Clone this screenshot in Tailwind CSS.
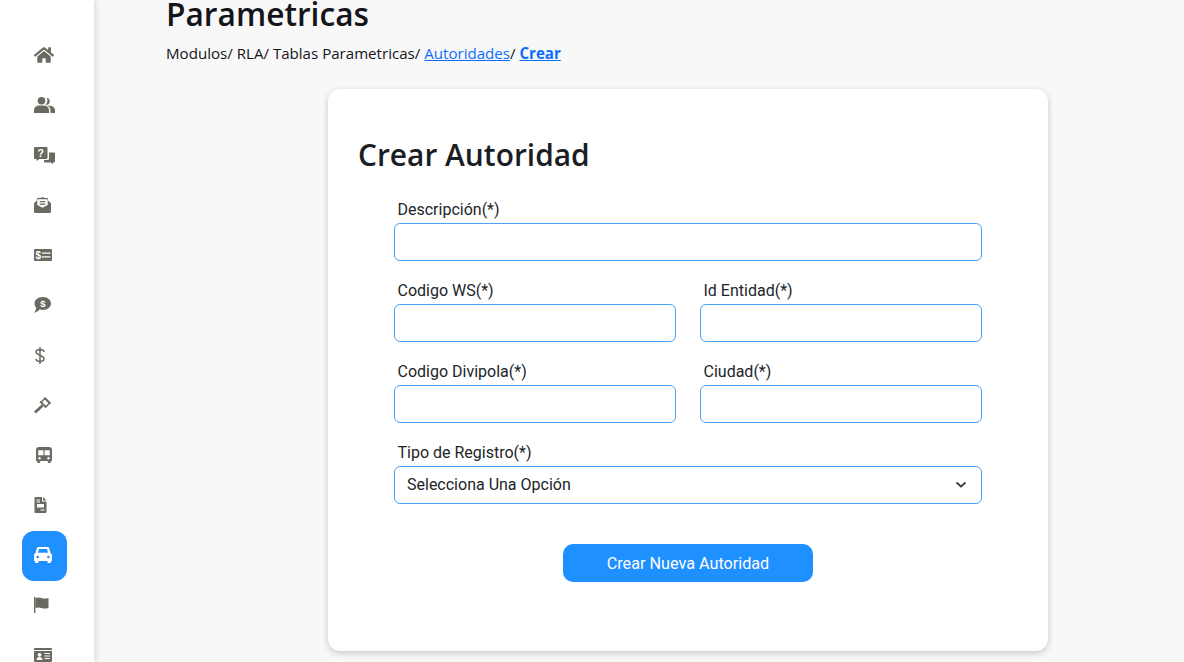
<!DOCTYPE html>
<html lang="es">
<head>
    <meta charset="UTF-8">
    <meta name="viewport" content="width=device-width, initial-scale=1.0">
    <title>Crear Autoridad</title>
    <script src="https://cdn.jsdelivr.net/npm/@tailwindcss/browser@4"></script>
</head>
<body class="bg-[#f8f8f8] h-[662px] overflow-hidden flex font-['Roboto',sans-serif] text-[#212529]">

    <!-- Sidebar -->
    <aside class="w-[94px] h-[662px] shrink-0 bg-white shadow-[0_0_8px_rgba(0,0,0,0.18)] overflow-hidden z-10">
        <nav class="flex flex-col pt-[30px] pl-[22px] text-[#6b6a60]">
            <a class="w-[45px] h-[50px] flex items-center pl-[12px]">
                <svg class="w-[20px] h-[18px]" viewBox="0 0 576 512" fill="currentColor"><path d="M280.37 148.26L96 300.11V464a16 16 0 0 0 16 16l112.06-.29a16 16 0 0 0 15.92-16V368a16 16 0 0 1 16-16h64a16 16 0 0 1 16 16v95.64a16 16 0 0 0 16 16.05L464 480a16 16 0 0 0 16-16V300L295.67 148.26a12.19 12.19 0 0 0-15.3 0zM571.6 251.47L488 182.56V44.05a12 12 0 0 0-12-12h-56a12 12 0 0 0-12 12v72.61L318.47 43a48 48 0 0 0-61 0L4.34 251.47a12 12 0 0 0-1.6 16.9l25.5 31A12 12 0 0 0 45.15 301l235.22-193.74a12.19 12.19 0 0 1 15.3 0L530.9 301a12 12 0 0 0 16.9-1.6l25.5-31a12 12 0 0 0-1.7-16.93z"/></svg>
            </a>
            <a class="w-[45px] h-[50px] flex items-center pl-[12px]">
                <svg class="w-[21px] h-[16px]" viewBox="0 0 21 16" fill="currentColor"><circle cx="7.500" cy="3.800" r="3.800"/><path d="M0 16v-2.500C0 10 2.500 8.500 5 8.500h5c2.500 0 5 1.500 5 5V16z"/><path d="M12.500.6a3.800 3.800 0 0 1 1.500 7A4 4 0 0 1 11.500 7.700 5.200 5.200 0 0 0 12.500.6z"/><path d="M13 8.600c3.500 0 8 .9 8 5V16h-4.500v-2.800c0-2-1.300-3.600-3.500-4.600z"/></svg>
            </a>
            <a class="w-[45px] h-[50px] flex items-center pl-[12px]">
                <svg class="w-[21px] h-[17px]" viewBox="0 0 21 17"><path fill="currentColor" d="M1 0h11.500a1 1 0 0 1 1 1v10a1 1 0 0 1-1 1H5.500L2.500 14v-2H1a1 1 0 0 1-1-1V1a1 1 0 0 1 1-1z"/><path fill="currentColor" d="M15 5.500h5a1 1 0 0 1 1 1v8a1 1 0 0 1-1 1h-1v1.500L16.500 15.500h-5.500a1 1 0 0 1-1-1v-1.500h3.500a1.500 1.500 0 0 0 1.500-1.500z"/><text x="6.700" y="9.700" font-size="10.500" font-weight="700" text-anchor="middle" fill="#fff" font-family="Liberation Sans, sans-serif">?</text></svg>
            </a>
            <a class="w-[45px] h-[50px] flex items-center pl-[12px]">
                <svg class="w-[17px] h-[16px]" viewBox="0 0 18 17"><path fill="currentColor" d="M0 6.500 3 4V2a1 1 0 0 1 1-1h2.800L9 0l2.200 1H14a1 1 0 0 1 1 1v2l3 2.500V16a1 1 0 0 1-1 1H1a1 1 0 0 1-1-1z"/><path fill="#fff" d="M3.500 2.500h11v6L9 11.500 3.500 8.500z"/><path stroke="currentColor" stroke-width="1.300" d="M6 5h6M6 7.500h6"/></svg>
            </a>
            <a class="w-[45px] h-[50px] flex items-center pl-[12px]">
                <svg class="w-[18px] h-[12px]" viewBox="0 0 18 12"><rect width="18" height="12" rx="1" fill="currentColor"/><text x="4.200" y="9.600" font-size="10" font-weight="700" text-anchor="middle" fill="#fff" font-family="Liberation Sans, sans-serif">$</text><path stroke="#fff" stroke-width="1.300" d="M8 4.200h8.500M8 7.800h8.500"/></svg>
            </a>
            <a class="w-[45px] h-[50px] flex items-center pl-[12px]">
                <svg class="w-[17px] h-[16px]" viewBox="0 0 17 16"><path fill="currentColor" d="M8.800 0C13.500 0 17 2.900 17 6.500S13.500 13 8.800 13c-1.200 0-2.300-.2-3.300-.5C4.400 13.900 2.500 15.500 0 15.800c1-1 2-2.700 2.200-5C1 9.600.5 8.100.5 6.500.5 2.900 4 0 8.800 0z"/><text x="8.800" y="10" font-size="9.500" font-weight="700" text-anchor="middle" fill="#fff" font-family="Liberation Sans, sans-serif">$</text></svg>
            </a>
            <a class="w-[45px] h-[50px] flex items-center pl-[13px]">
                <svg class="w-[10px] h-[17px]" viewBox="0 0 10 17" fill="none" stroke="currentColor" stroke-width="1.500"><path d="M9 5c0-1.500-1.500-2.500-4-2.500S1 3.600 1 5c0 3.500 8 3 8 6.800 0 1.500-1.700 2.700-4 2.700s-4-1-4-2.700M5 0v17"/></svg>
            </a>
            <a class="w-[45px] h-[50px] flex items-center pl-[12px]">
                <svg class="w-[17px] h-[17px]" viewBox="0 0 17 17"><path d="M10.800 1.500 15.500 6.200 11.800 9.900 7.100 5.200z" fill="#fff" stroke="currentColor" stroke-width="1.500"/><path d="M8.500 8.500 1 15.500" stroke="currentColor" stroke-width="2.800"/><path d="M10.500.5l6 6M6 4.500l6 6" stroke="currentColor" stroke-width="1.600"/></svg>
            </a>
            <a class="w-[45px] h-[50px] flex items-center pl-[13.500px]">
                <svg class="w-[16px] h-[16px]" viewBox="0 0 16 16"><path fill="currentColor" d="M3 0h10a3 3 0 0 1 3 3v11h-1.200v1.200a.8.800 0 0 1-.8.800h-1.400a.8.800 0 0 1-.8-.8V14H4.200v1.200a.8.800 0 0 1-.8.800H2a.8.800 0 0 1-.8-.8V14H0V3a3 3 0 0 1 3-3z"/><path fill="#fff" d="M2.200 3.200h5.200v5H2.200zM8.600 3.200h5.200v5H8.600z"/><circle cx="3.500" cy="11.200" r="1.200" fill="#fff"/><circle cx="12.500" cy="11.200" r="1.200" fill="#fff"/></svg>
            </a>
            <a class="w-[45px] h-[50px] flex items-center pl-[12px]">
                <svg class="w-[13px] h-[16px]" viewBox="0 0 12 16"><path fill="currentColor" d="M1 0h6.500v4.500H12V15a1 1 0 0 1-1 1H1a1 1 0 0 1-1-1V1a1 1 0 0 1 1-1zM8.500 0 12 3.500H8.500z"/><rect x="2.500" y="7" width="7" height="3.500" fill="#fff"/><path stroke="#fff" d="M2 3h3.500M2 5h3.500M6 13h4"/></svg>
            </a>
            <a class="w-[45px] h-[50px] translate-y-[1px] bg-[#1e90ff] rounded-[12px] flex items-center pl-[12px]">
                <svg class="w-[18px] h-[16px] -translate-y-[1px]" viewBox="0 0 18 16"><path fill="#fff" d="M4.500 0h9c.8 0 1.400.5 1.700 1.200L16.500 6c.9.400 1.500 1.300 1.500 2.300V14h-1v1.200a.8.800 0 0 1-.8.800h-1.900a.8.800 0 0 1-.8-.8V14H4.500v1.200a.8.800 0 0 1-.8.800H1.800a.8.800 0 0 1-.8-.8V14H0V8.300C0 7.300.6 6.400 1.500 6l1.300-4.800C3.100.5 3.700 0 4.500 0z"/><path fill="#1e90ff" d="M5 2h8l1 3.800H4z"/><circle cx="3.600" cy="10" r="1.300" fill="#1e90ff"/><circle cx="14.400" cy="10" r="1.300" fill="#1e90ff"/></svg>
            </a>
            <a class="w-[45px] h-[50px] flex items-center pl-[12px]">
                <svg class="w-[15px] h-[16px]" viewBox="0 0 15 16" fill="currentColor"><path d="M0 0h1.400v16H0z"/><path d="M1.400 1c2-.8 4-.8 6 0s4 .7 7.100 0v10c-3 .8-5 .8-7 0s-4-.7-6.100 0z"/></svg>
            </a>
            <a class="w-[45px] h-[50px] flex items-center pl-[12px]">
                <svg class="w-[18px] h-[14px]" viewBox="0 0 18 14"><rect width="18" height="14" rx="1" fill="currentColor"/><path stroke="#fff" d="M0 2.500h18"/><circle cx="5.500" cy="6.800" r="1.900" fill="#fff"/><path fill="#fff" d="M2.500 12c0-2 1.300-3 3-3s3 1 3 3z"/><path stroke="#fff" stroke-width="1.200" d="M10.500 5.500h5.500M10.500 8h5.500M10.500 10.500h5.500"/></svg>
            </a>
        </nav>
    </aside>

    <!-- Contenido -->
    <main class="flex-1 pl-[72px] -mt-[10px]">
        <h1 class="font-['Open_Sans',sans-serif] font-semibold text-[31.7px] leading-[48px] text-[#14141a]">Parametricas</h1>
        <p class="font-['Open_Sans',sans-serif] text-[15.1px] leading-[22px] mt-[4px] text-[#14141a]">
            Modulos/ RLA/ Tablas Parametricas/
            <a href="#" class="text-[#0d6efd] underline">Autoridades</a>/
            <a href="#" class="text-[#0d6efd] underline font-bold">Crear</a>
        </p>

        <section class="w-[720px] h-[562px] ml-[162px] mt-[25px] bg-white rounded-[12px] shadow-[0_2px_6px_rgba(0,0,0,0.2)] pl-[30px] pt-[44px]">
            <h2 class="font-['Open_Sans',sans-serif] font-semibold text-[29.9px] leading-[44px] text-[#1a1d24]">Crear Autoridad</h2>

            <form class="w-[588px] ml-[36px] mt-[21px]">
                <label class="block pl-[3.500px] leading-[24px] mb-[1px]">Descripción(*)</label>
                <input class="block w-full h-[38px] border border-[#4aa3f5] rounded-[6px] bg-white">

                <div class="grid grid-cols-2 gap-x-[24px] gap-y-[18px] mt-[18px]">
                    <div>
                        <label class="block pl-[3.500px] leading-[24px] mb-[1px]">Codigo WS(*)</label>
                        <input class="block w-full h-[38px] border border-[#4aa3f5] rounded-[6px] bg-white">
                    </div>
                    <div>
                        <label class="block pl-[3.500px] leading-[24px] mb-[1px]">Id Entidad(*)</label>
                        <input class="block w-full h-[38px] border border-[#4aa3f5] rounded-[6px] bg-white">
                    </div>
                    <div>
                        <label class="block pl-[3.500px] leading-[24px] mb-[1px]">Codigo Divipola(*)</label>
                        <input class="block w-full h-[38px] border border-[#4aa3f5] rounded-[6px] bg-white">
                    </div>
                    <div>
                        <label class="block pl-[3.500px] leading-[24px] mb-[1px]">Ciudad(*)</label>
                        <input class="block w-full h-[38px] border border-[#4aa3f5] rounded-[6px] bg-white">
                    </div>
                </div>

                <label class="block pl-[3.500px] leading-[24px] mb-[1px] mt-[18px]">Tipo de Registro(*)</label>
                <div class="relative">
                    <select class="block w-full h-[38px] border border-[#4aa3f5] rounded-[6px] bg-white px-[12px] appearance-none">
                        <option>Selecciona Una Opción</option>
                    </select>
                    <svg class="absolute right-[15px] top-[14px] w-[12px] h-[9px]" viewBox="0 0 12 9" fill="none" stroke="#343a40" stroke-width="1.700"><path d="M1.500 2.500l4.500 4 4.500-4"/></svg>
                </div>

                <div class="flex justify-center mt-[40px]">
                    <button type="button" class="w-[250px] h-[38px] pt-[2px] bg-[#1e90ff] text-white text-[16.2px] rounded-[10px]">Crear Nueva Autoridad</button>
                </div>
            </form>
        </section>
    </main>

</body>
</html>
